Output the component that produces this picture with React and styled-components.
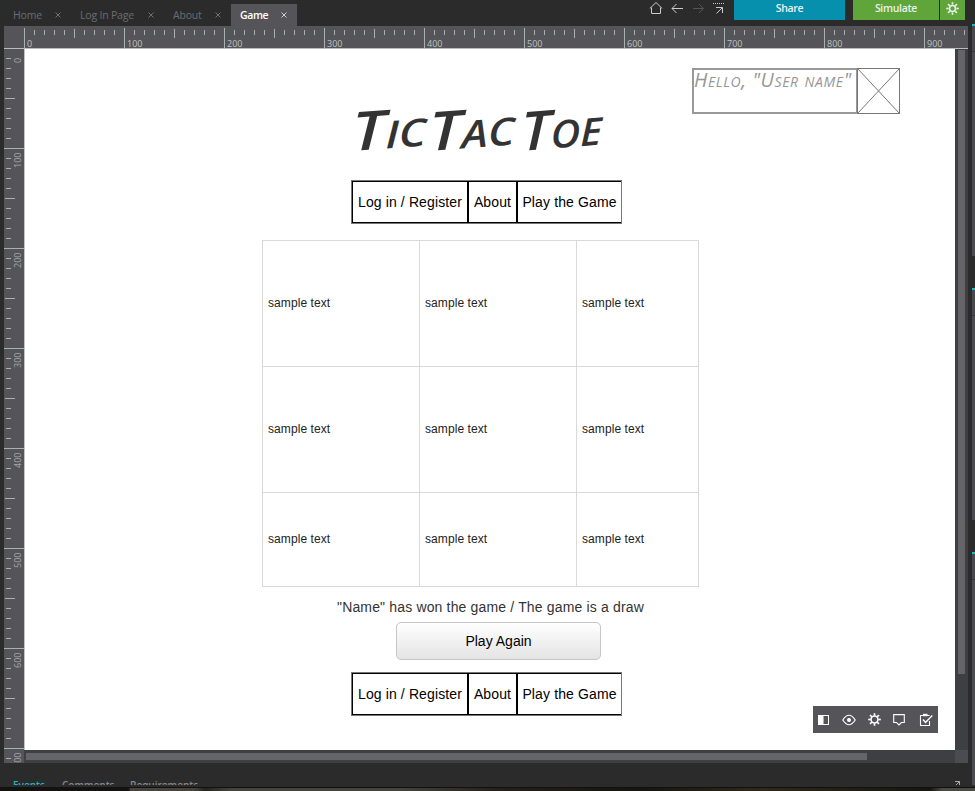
import React from 'react';
import styled, { createGlobalStyle } from 'styled-components';

const GlobalStyle = createGlobalStyle`
  * { box-sizing: border-box; }
  html, body { margin: 0; padding: 0; overflow: hidden; background: #2b2b2b; }
  svg { display: block; flex: none; }
`;

const uiFont = '"Open Sans", "Noto Sans", sans-serif';
const tick = '#a9b0b3';

const Page = styled.div`
  width: 975px;
  height: 791px;
  display: grid;
  grid-template-rows: 787px 4px;
  background: #2b2b2b;
  font-family: ${uiFont};
  overflow: hidden;
`;

const Main = styled.div`
  display: grid;
  grid-template-columns: 968px 3px;
  column-gap: 4px;
`;

const Editor = styled.div`
  display: grid;
  grid-template-rows: 26px 23px 701px 13px 22px;
  padding-left: 4px;
`;

const TopBar = styled.header`
  display: flex;
  justify-content: space-between;
  align-items: flex-start;
  overflow: hidden;
`;

const Tabs = styled.nav`
  display: flex;
  padding-top: 4px;
`;

const Tab = styled.div`
  width: ${(p) => p.$width}px;
  height: 22px;
  padding: 0 10px 0 9px;
  display: flex;
  justify-content: space-between;
  align-items: center;
  white-space: nowrap;
  font-size: 10.5px;
  font-weight: ${(p) => (p.$active ? 600 : 400)};
  letter-spacing: ${(p) => (p.$active ? -0.4 : -0.2)}px;
  color: ${(p) => (p.$active ? '#fff' : '#696e71')};
  background: ${(p) => (p.$active ? '#555459' : 'transparent')};
`;

const Actions = styled.div`
  display: flex;
  padding-right: 3px;
`;

const NavIcons = styled.div`
  display: flex;
  gap: 7px;
  margin-right: 8px;
`;

const Action = styled.div`
  width: ${(p) => p.$width}px;
  height: 20px;
  margin-right: ${(p) => p.$gap || 0}px;
  background: ${(p) => p.$color};
  color: #e9f1ee;
  display: flex;
  justify-content: center;
  font-size: 10.5px;
  line-height: 16px;
  font-weight: 600;
  letter-spacing: -0.3px;
`;

const HRuler = styled.div`
  display: flex;
  overflow: hidden;
  padding-top: 2px;
  background: #555459;
  border-bottom: 1px solid #b9bcbe;
`;

const Corner = styled.div`
  flex: 0 0 20px;
`;

const HSegment = styled.div`
  flex: 0 0 100px;
  display: flex;
  border-left: 1px solid ${tick};
`;

const HLabel = styled.span`
  margin-top: 10px;
  margin-left: 2px;
  width: 0;
  font-size: 9px;
  line-height: 11px;
  color: #bfc3c5;
`;

const HTickOffset = styled.div`
  margin-left: -2px;
`;

const Middle = styled.div`
  display: grid;
  grid-template-columns: 20px 1px 930px 13px;
`;

const VRuler = styled.div`
  height: 714px;
  overflow: hidden;
  background: #555459;
`;

const VSegment = styled.div`
  height: 100px;
  display: flex;
  border-bottom: 1px solid ${tick};
`;

const VLabel = styled.span`
  margin: 3px 0 0 -4px;
  width: 12px;
  height: 16px;
  text-align: center;
  writing-mode: vertical-rl;
  transform: rotate(180deg);
  font-size: 9px;
  line-height: 12px;
  color: #a3a6a9;
`;

const Edge = styled.div`
  background: #c2c4c5;
`;

const Canvas = styled.main`
  background: #fff;
  display: grid;
  grid-template-columns: 1fr;
  grid-template-rows: 65px 66px 44px 16px 347px 35px 38px 12px 44px 34px;
  font-family: "Liberation Sans", Arial, sans-serif;
`;

const Greeting = styled.div`
  display: flex;
  justify-content: flex-end;
  padding: 19px 55px 0 0;
`;

const Hello = styled.div`
  width: 165px;
  height: 46px;
  border: 2px solid #999;
  border-right-width: 1px;
  white-space: nowrap;
  color: #969696;
  font: italic small-caps 400 19.5px/20px "Open Sans", sans-serif;
  letter-spacing: 0.65px;
`;

const Title = styled.h1`
  margin: 0;
  padding-left: 327px;
  display: flex;
  color: #333;
  font: italic small-caps 600 54px/32px "Open Sans", sans-serif;
`;

const Word = styled.span`
  width: ${(p) => p.$slot}px;
  white-space: nowrap;
  transform: scaleX(${(p) => p.$stretch}) skewY(-5deg);
  transform-origin: 0 50%;
`;

const Links = styled.nav`
  width: 271px;
  margin-left: 326px;
  display: grid;
  grid-template-columns: 114px 47px 103px;
  column-gap: 2px;
  padding: 1px 0 1px 1px;
  background: #000;
  border: 1px solid #777;
`;

const LinkCell = styled.a`
  display: flex;
  align-items: center;
  justify-content: center;
  padding-bottom: 1px;
  background: #fff;
  color: #000;
  font-size: 14px;
  letter-spacing: 0.12px;
  white-space: nowrap;
`;

const Board = styled.div`
  grid-row: 5;
  width: 437px;
  margin-left: 237px;
  display: grid;
  grid-template-columns: 156px 156px 121px;
  grid-template-rows: 125px 125px 93px;
  gap: 1px;
  padding: 1px;
  background: #d9d9d9;
`;

const Square = styled.div`
  display: flex;
  align-items: center;
  padding: 0 0 2px 5px;
  background: #fff;
  color: #222;
  font-size: 12px;
  letter-spacing: 0.08px;
`;

const Result = styled.p`
  grid-row: 6;
  margin: 0 0 0 312px;
  padding-top: 12px;
  white-space: nowrap;
  font-size: 14px;
  line-height: 17px;
  letter-spacing: 0.16px;
  color: #333;
`;

const PlayAgain = styled.button`
  grid-row: 7;
  width: 205px;
  margin-left: 371px;
  border: 1px solid #c6c6c6;
  border-radius: 5px;
  background: linear-gradient(#fff, #e4e4e4);
  color: #000;
  font: 14px "Liberation Sans", Arial, sans-serif;
`;

const FooterLinks = styled(Links)`
  grid-row: 9;
`;

const VScroll = styled.div`
  background: #3e3f43;
  padding: 1px 3px 0;
`;

const VThumb = styled.div`
  height: 624px;
  background: #656567;
`;

const HScroll = styled.div`
  margin-left: 20px;
  background: #3e3f43;
  display: flex;
  justify-content: space-between;
  align-items: center;
  padding-left: 2px;
`;

const HThumb = styled.div`
  width: 841px;
  height: 7px;
  background: #656567;
`;

const ScrollCorner = styled.div`
  width: 13px;
  height: 13px;
  background: #4b4c51;
`;

const BottomTabs = styled.footer`
  display: flex;
  padding: 15px 7px 0 9px;
  overflow: hidden;
  font-size: 10px;
  line-height: 14px;
  font-weight: 600;
`;

const BottomTab = styled.span`
  width: ${(p) => p.$width}px;
  color: ${(p) => (p.$active ? '#20b8bb' : '#85898b')};
`;

const Expand = styled.div`
  margin-left: auto;
  padding-top: 3px;
`;

const SidePanel = styled.aside`
  display: flex;
  flex-direction: column;
  padding-top: 24px;
`;

const SideBlock = styled.div`
  height: ${(p) => p.$height}px;
  margin-bottom: 32px;
  border-top: 2px solid #18bcc0;
  background: linear-gradient(#47474c 25px, #35353a 25px, #35353a 26px, #4b4b50 26px);
`;

const Desktop = styled.div`
  border-top: 1px solid #111;
  background: linear-gradient(90deg, #15130f 0 129px, #46443b 130px 195px, #25231c 205px, #45443a 230px 400px, #252018 500px, #17150f 640px, #302919 760px, #17160e 930px, #4a4b43 942px);
`;

const FloatingTools = styled.div`
  position: absolute;
  left: 813px;
  top: 706px;
  width: 125px;
  height: 27px;
  padding: 0 5px;
  display: flex;
  align-items: center;
  gap: 12px;
  background: #555459;
`;

function Close({ color }) {
  return (
    <svg width="6" height="6" viewBox="0 0 6 6" stroke={color} strokeWidth="0.9">
      <path d="M.5 .5l5 5M5.5 .5l-5 5" />
    </svg>
  );
}

function Gear({ size, color, inner }) {
  return (
    <svg width={size} height={size} viewBox="-7 -7 14 14" fill="none" stroke={color}>
      <circle r={inner} strokeWidth="1.7" />
      {[0, 45, 90, 135, 180, 225, 270, 315].map((a) => (
        <path key={a} d="M0 -4.2V-6.8" strokeWidth="1.8" transform={`rotate(${a})`} />
      ))}
    </svg>
  );
}

function HTicks() {
  return (
    <svg width="99" height="20" stroke={tick} shapeRendering="crispEdges">
      {[10, 20, 30, 40, 50, 60, 70, 80, 90].map((x) => (
        <path key={x} d={x === 50 ? 'M49.5 1V10' : `M${x - 0.5} 2V7`} />
      ))}
    </svg>
  );
}

function VTicks() {
  return (
    <svg width="12" height="99" stroke={tick} shapeRendering="crispEdges">
      {[10, 20, 30, 40, 50, 60, 70, 80, 90].map((y) => (
        <path key={y} d={y === 50 ? 'M1 49.5H11' : `M2 ${y - 0.5}H7`} />
      ))}
    </svg>
  );
}

function LinkCells() {
  return (
    <>
      <LinkCell>Log in / Register</LinkCell>
      <LinkCell>About</LinkCell>
      <LinkCell>Play the Game</LinkCell>
    </>
  );
}

const segments = [0, 100, 200, 300, 400, 500, 600, 700, 800, 900];

export default function App() {
  return (
    <Page>
      <GlobalStyle />
      <Main>
        <Editor>
          <TopBar>
            <Tabs>
              <Tab $width={67}>Home<Close color="#777" /></Tab>
              <Tab $width={93}>Log In Page<Close color="#777" /></Tab>
              <Tab $width={67}>About<Close color="#777" /></Tab>
              <Tab $width={66} $active>Game<Close color="#ddd" /></Tab>
            </Tabs>
            <Actions>
              <NavIcons>
                <svg width="14" height="16" fill="none" stroke="#c9cccd">
                  <path d="M.8 8.5L7 2.5l6.2 6M2.5 7.5v6h9v-6" />
                </svg>
                <svg width="14" height="16" fill="none" stroke="#c9cccd">
                  <path d="M13 8.5H2M6.5 4L2 8.5L6.5 13" />
                </svg>
                <svg width="14" height="16" fill="none" stroke="#555">
                  <path d="M2 8.5H12M8 4l4.5 4.5L8 13" />
                </svg>
                <svg width="14" height="16" fill="none" stroke="#c9cccd">
                  <path d="M1 3.5H13" strokeDasharray="1 1" />
                  <path d="M4 7.5H10.5V13M10.5 7.5L4.5 13.5" />
                </svg>
              </NavIcons>
              <Action $width={111} $gap={8} $color="#0790ae">Share</Action>
              <Action $width={86} $gap={1} $color="#5fa53a">Simulate</Action>
              <Action $width={25} $color="#5fa53a">
                <svg width="13" height="17" viewBox="0 -2 13 17">
                  <Gear size={13} color="#e9f1ee" inner={3.2} />
                </svg>
              </Action>
            </Actions>
          </TopBar>
          <HRuler>
            <Corner />
            {segments.map((n) => (
              <HSegment key={n}><HLabel>{n}</HLabel><HTickOffset><HTicks /></HTickOffset></HSegment>
            ))}
          </HRuler>
          <Middle>
            <VRuler>
              {segments.slice(0, 8).map((n) => (
                <VSegment key={n}><VTicks /><VLabel>{n}</VLabel></VSegment>
              ))}
            </VRuler>
            <Edge />
            <Canvas>
              <Greeting>
                <Hello>Hello, "User name"</Hello>
                <svg width="43" height="46" fill="none" stroke="#777">
                  <rect x=".5" y=".5" width="42" height="45" />
                  <path d="M.5 .5L42.5 45.5M42.5 .5L.5 45.5" />
                </svg>
              </Greeting>
              <Title>
                <Word $slot={77} $stretch={1.2}>Tic</Word>
                <Word $slot={92} $stretch={1.17}>Tac</Word>
                <Word $slot={82} $stretch={1.07}>Toe</Word>
              </Title>
              <Links><LinkCells /></Links>
              <Board>
                {Array.from({ length: 9 }, (_, i) => <Square key={i}>sample text</Square>)}
              </Board>
              <Result>"Name" has won the game / The game is a draw</Result>
              <PlayAgain>Play Again</PlayAgain>
              <FooterLinks><LinkCells /></FooterLinks>
            </Canvas>
            <VScroll><VThumb /></VScroll>
          </Middle>
          <HScroll><HThumb /><ScrollCorner /></HScroll>
          <BottomTabs>
            <BottomTab $width={49} $active>Events</BottomTab>
            <BottomTab $width={68}>Comments</BottomTab>
            <BottomTab $width={80}>Requirements</BottomTab>
            <Expand>
              <svg width="7" height="7" fill="none" stroke="#aaa">
                <path d="M1 .5H5.5V5M5.5 .5L1 5" />
              </svg>
            </Expand>
          </BottomTabs>
        </Editor>
        <SidePanel>
          <SideBlock $height={232} />
          <SideBlock $height={232} />
          <SideBlock $height={233} />
        </SidePanel>
      </Main>
      <Desktop />
      <FloatingTools>
        <svg width="12" height="12" fill="none" stroke="#fff">
          <rect x=".5" y="1.5" width="10" height="9" />
          <path d="M1 1.5h4v9H1z" fill="#fff" />
        </svg>
        <svg width="14" height="12" fill="none" stroke="#fff" strokeWidth="1.2">
          <path d="M.8 6Q7-3.5 13.2 6Q7 15.5 .8 6z" />
          <circle cx="7" cy="6" r="1.4" fill="#fff" />
        </svg>
        <Gear size={13} color="#fff" inner={3.7} />
        <svg width="12" height="13" fill="none" stroke="#fff" strokeWidth="1.1">
          <path d="M.7 1.6H11.3V9.5H8.4L6 12L3.6 9.5H.7z" />
        </svg>
        <svg width="16" height="14" viewBox="-2 0 16 14" fill="none" stroke="#fff" strokeWidth="1.1">
          <path d="M10.5 8V12.5H1.5V2.5H10.5" />
          <path d="M4 2H8.5" strokeWidth="2.4" />
          <path d="M4 6.5L6.5 9.5L13.3 2.5" strokeWidth="1.4" />
        </svg>
      </FloatingTools>
    </Page>
  );
}
